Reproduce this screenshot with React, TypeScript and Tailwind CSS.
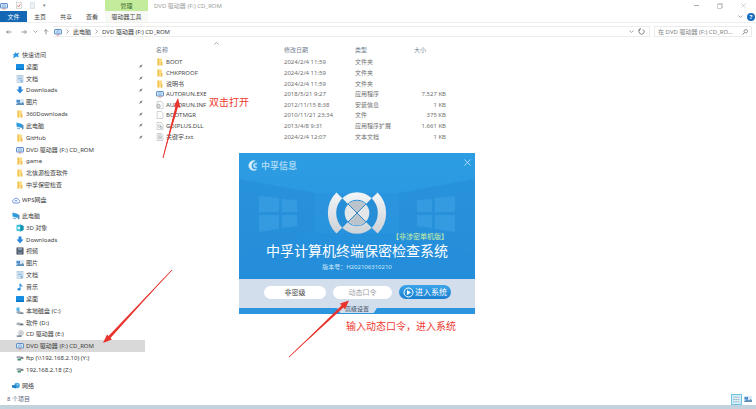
import React from 'react';

type IconName =
  | 'disc' | 'star' | 'desktop' | 'doc' | 'down' | 'picture' | 'folder' | 'pc' | 'cloud'
  | 'cube' | 'video' | 'music' | 'osdrive' | 'drive' | 'cd' | 'netdrive' | 'network'
  | 'inf' | 'file' | 'dll' | 'txt';

function Icon({ name }: { name: IconName }) {
  return (
    <svg viewBox="0 0 16 16" className="h-2 w-2 shrink-0" aria-hidden="true">
      {name === 'disc' && (
        <>
          <rect x="0" y="2" width="16" height="11" rx="3" fill="#5f8fc9" />
          <rect x="2" y="4" width="12" height="7" rx="1" fill="#dceaf8" />
          <circle cx="8" cy="8" r="3.6" fill="#7fb2e6" />
          <circle cx="8" cy="8" r="1.3" fill="#fff" />
          <path d="M5 13h6v2H5z" fill="#d58f86" />
        </>
      )}
      {name === 'star' && <path d="M6 2l3 3 6-2-3 5 2 5-5-2-7 4 2-6-3-2 4-1z" fill="#2c97de" />}
      {name === 'desktop' && (
        <>
          <rect x="0" y="2" width="16" height="12" rx="1" fill="#168de2" />
          <path d="M0 11h16v2a1 1 0 0 1-1 1H1a1 1 0 0 1-1-1z" fill="#0b74c4" />
        </>
      )}
      {name === 'doc' && (
        <>
          <rect x="2" y="1" width="12" height="14" fill="#e9f2fa" stroke="#8ca9c2" />
          <path d="M4 4h8M4 7h8M4 10h5" stroke="#4f8fc4" />
          <path d="M9 9h4v5H9z" fill="#7fb4df" />
        </>
      )}
      {name === 'down' && <path d="M5 1h6v6h4l-7 8-7-8h4z" fill="#2b88dd" />}
      {name === 'picture' && (
        <>
          <rect x="0" y="2" width="16" height="12" fill="#d8eaf8" />
          <path d="M1 4h7v5H1z" fill="#4a8ccb" />
          <path d="M0 13l6-5 4 3 3-3 3 3v3H0z" fill="#5d90b9" />
        </>
      )}
      {name === 'folder' && (
        <>
          <path d="M3 1h9v14H3z" fill="#fbdc84" />
          <path d="M3 1h3v14H3z" fill="#f2c453" />
          <path d="M10 8h3v7h-3z" fill="#efc25c" />
        </>
      )}
      {name === 'pc' && (
        <>
          <path d="M1 1l11 3v8L1 9z" fill="#2e9be0" />
          <path d="M12 5l3 1v8l-3 1z" fill="#5c8fb5" />
          <path d="M3 11l6 2-2 2-6-2z" fill="#8ab4d3" />
        </>
      )}
      {name === 'cloud' && (
        <path
          d="M4 14a3.2 3.2 0 0 1-.5-6.300A5 5 0 0 1 13 8a3 3 0 0 1-.5 6zM6 11l2-3 2 3"
          fill="none" stroke="#5b86dd" strokeWidth="1.700"
        />
      )}
      {name === 'cube' && (
        <>
          <path d="M1 2l8-1 6 3v8l-6 3-8-2z" fill="#35c0d6" />
          <path d="M9 1l6 3v8l-6 3z" fill="#1690ad" />
          <path d="M3 5l5 1v5l-5-1z" fill="#d9f6fa" />
        </>
      )}
      {name === 'video' && (
        <>
          <rect x="1" y="1" width="14" height="14" fill="#3f4650" />
          <rect x="4" y="2" width="8" height="5" fill="#8397b4" />
          <rect x="4" y="9" width="8" height="5" fill="#6f7f95" />
          <path d="M2.500 2v12M13.500 2v12" stroke="#c9ced6" strokeDasharray="1.500 1.500" />
        </>
      )}
      {name === 'music' && (
        <>
          <path d="M7 1h2c0 3 5 3 4 8-1-2-2-3-4-3v6H7z" fill="#1f8fe0" />
          <ellipse cx="6" cy="12.500" rx="3.200" ry="2.500" fill="#1f8fe0" />
        </>
      )}
      {name === 'osdrive' && (
        <>
          <path d="M1 1h6v7H1z" fill="#56b4ea" />
          <path d="M1 9l4-1 10 3v3H6l-5-2z" fill="#98a5ae" />
          <path d="M10 12h4v1h-4z" fill="#3d5363" />
        </>
      )}
      {name === 'drive' && (
        <>
          <path d="M1 8l4-1 10 2v4H6l-5-2z" fill="#a5adb3" />
          <path d="M9 10h5v2H9z" fill="#59646c" />
        </>
      )}
      {name === 'cd' && (
        <>
          <circle cx="10" cy="6" r="5" fill="#dfe3e8" stroke="#a2a8af" />
          <circle cx="10" cy="6" r="1.300" fill="#8e959c" />
          <path d="M1 11l10-1v4H4l-3-1z" fill="#858d94" />
        </>
      )}
      {name === 'netdrive' && (
        <>
          <path d="M1 5l5-1 9 2v4H6L1 8z" fill="#a2aab1" />
          <path d="M3 10h7v3H3z" fill="#39966b" />
          <path d="M10 7h4v2h-4z" fill="#4c5962" />
        </>
      )}
      {name === 'network' && (
        <>
          <circle cx="10" cy="7" r="5.500" fill="#3f9fdc" />
          <path d="M0 6l8 1v6l-8-2z" fill="#1d7fc6" />
          <path d="M8 3l5 1-1 4z" fill="#9cd4f3" />
        </>
      )}
      {(name === 'inf' || name === 'file' || name === 'dll' || name === 'txt') && (
        <path d="M2 1h9l3 3v11H2z" fill="#fbfbfb" stroke="#a9adb1" />
      )}
      {name === 'inf' && <circle cx="5" cy="10" r="3.500" fill="#e2e4e6" stroke="#74797d" />}
      {name === 'dll' && (
        <>
          <circle cx="7" cy="8" r="2.500" fill="none" stroke="#8b9196" />
          <circle cx="10" cy="11" r="2" fill="none" stroke="#8b9196" />
        </>
      )}
      {name === 'txt' && <path d="M4 4h7M4 6.500h8M4 9h8M4 11.500h8" stroke="#8d9297" />}
    </svg>
  );
}

function Pin() {
  return (
    <svg viewBox="0 0 10 10" className="h-[5px] w-[5px]" aria-hidden="true">
      <path d="M9 1L6 2 3 4l1 1-3 4 4-3 1 1 2-3z" fill="#7b828a" />
    </svg>
  );
}

function Chevron({ dir }: { dir: 'right' | 'down' | 'up' }) {
  const paths = { right: 'M3 1l4 4-4 4', down: 'M1 3l4 4 4-4', up: 'M1 7l4-4 4 4' };
  return (
    <svg viewBox="0 0 10 10" className="h-[5px] w-[5px] shrink-0" aria-hidden="true">
      <path d={paths[dir]} fill="none" stroke="#888" strokeWidth="1.500" />
    </svg>
  );
}

function Arrow({ dir }: { dir: 'left' | 'right' | 'up' }) {
  const paths = {
    left: 'M9 5H1M4 2L1 5l3 3',
    right: 'M1 5h8M6 2l3 3-3 3',
    up: 'M5 9V1M2 4l3-3 3 3',
  };
  return (
    <svg viewBox="0 0 10 10" className="h-[6px] w-[6px]" aria-hidden="true">
      <path d={paths[dir]} fill="none" stroke="#777" strokeWidth="1.300" />
    </svg>
  );
}

interface Place {
  icon: IconName;
  label: string;
  pinned?: boolean;
  root?: boolean;
  active?: boolean;
}

const quick: Place[] = [
  { icon: 'star', label: '快速访问', root: true },
  { icon: 'desktop', label: '桌面', pinned: true },
  { icon: 'doc', label: '文档', pinned: true },
  { icon: 'down', label: 'Downloads', pinned: true },
  { icon: 'picture', label: '图片', pinned: true },
  { icon: 'folder', label: '360Downloads', pinned: true },
  { icon: 'pc', label: '此电脑', pinned: true },
  { icon: 'folder', label: 'GitHub', pinned: true },
  { icon: 'disc', label: 'DVD 驱动器 (F:) CD_ROM' },
  { icon: 'folder', label: 'game' },
  { icon: 'folder', label: '北信源检查软件' },
  { icon: 'folder', label: '中孚保密检查' },
];

const computer: Place[] = [
  { icon: 'pc', label: '此电脑', root: true },
  { icon: 'cube', label: '3D 对象' },
  { icon: 'down', label: 'Downloads' },
  { icon: 'video', label: '视频' },
  { icon: 'picture', label: '图片' },
  { icon: 'doc', label: '文档' },
  { icon: 'music', label: '音乐' },
  { icon: 'desktop', label: '桌面' },
  { icon: 'osdrive', label: '本地磁盘 (C:)' },
  { icon: 'drive', label: '软件 (D:)' },
  { icon: 'cd', label: 'CD 驱动器 (E:)' },
  { icon: 'disc', label: 'DVD 驱动器 (F:) CD_ROM', active: true },
  { icon: 'netdrive', label: 'ftp (\\\\192.168.2.10) (Y:)' },
  { icon: 'netdrive', label: '192.168.2.18 (Z:)' },
];

function PlaceRow({ place }: { place: Place }) {
  return (
    <a
      href="#"
      className={`flex min-h-0 items-center gap-[2px] pr-[2px] ${place.root ? 'pl-3' : 'pl-4'} ${place.active ? 'bg-[#d9d9d9]' : ''}`}
    >
      <Icon name={place.icon} />
      <span className="flex-1 whitespace-nowrap">{place.label}</span>
      {place.pinned && <Pin />}
    </a>
  );
}

const files: { icon: IconName; name: string; date: string; type: string; size: string }[] = [
  { icon: 'folder', name: 'BOOT', date: '2024/2/4 11:59', type: '文件夹', size: '' },
  { icon: 'folder', name: 'CHKPROOF', date: '2024/2/4 11:59', type: '文件夹', size: '' },
  { icon: 'folder', name: '说明书', date: '2024/2/4 11:59', type: '文件夹', size: '' },
  { icon: 'disc', name: 'AUTORUN.EXE', date: '2018/5/21 9:27', type: '应用程序', size: '7,527 KB' },
  { icon: 'inf', name: 'AUTORUN.INF', date: '2012/11/15 8:38', type: '安装信息', size: '1 KB' },
  { icon: 'file', name: 'BOOTMGR', date: '2010/11/21 23:34', type: '文件', size: '375 KB' },
  { icon: 'dll', name: 'GDIPLUS.DLL', date: '2013/4/8 9:31', type: '应用程序扩展', size: '1,661 KB' },
  { icon: 'txt', name: '关键字.txt', date: '2024/2/4 12:07', type: '文本文档', size: '1 KB' },
];

function TitleBar() {
  return (
    <header className="text-[#444]">
      <div className="flex h-[11px] items-center">
        <div className="flex w-[105px] items-center gap-2">
          <Icon name="disc" />
          <svg viewBox="0 0 12 14" className="h-[7px] w-[6px]" aria-hidden="true">
            <rect x="1" y="1" width="10" height="12" fill="#fff" stroke="#b5b5b5" />
            <path d="M3 7l2 3 4-6" fill="none" stroke="#dc5b48" strokeWidth="1.500" />
          </svg>
          <svg viewBox="0 0 10 14" className="h-[7px] w-[5px]" aria-hidden="true">
            <path d="M1 1h8v12H1z" fill="#edf2f6" stroke="#c2ccd5" />
          </svg>
          <span className="text-[5px] leading-none text-[#777]">▾</span>
        </div>
        <div className="flex h-full w-[43px] items-center justify-center bg-[#c3eb9c] text-[#3f6a2b]">管理</div>
        <div className="flex-1 pl-[6px] text-[#a0a0a0]">DVD 驱动器 (F:) CD_ROM</div>
        <div className="flex items-center gap-[18px] pr-[10px]">
          <button aria-label="最小化" className="h-px w-[5px] bg-[#aaa]" />
          <button aria-label="还原">
            <svg viewBox="0 0 12 12" className="h-[6px] w-[6px]" aria-hidden="true">
              <path d="M1 3h8v8H1zM3 3V1h8v8H9" fill="none" stroke="#999" />
            </svg>
          </button>
          <button aria-label="关闭">
            <svg viewBox="0 0 12 12" className="h-[5px] w-[5px]" aria-hidden="true">
              <path d="M1 1l10 10M11 1L1 11" stroke="#999" />
            </svg>
          </button>
        </div>
      </div>
      <nav className="flex h-3 items-stretch border-b border-[#f0f0f0]">
        <button className="w-[27px] bg-[#1467b5] text-white">文件</button>
        <button className="w-[26px]">主页</button>
        <button className="w-[26px]">共享</button>
        <button className="w-[26px]">查看</button>
        <button className="w-[43px] bg-[#f7faf4]">驱动器工具</button>
        <div className="ml-auto flex items-center gap-1 pr-px">
          <Chevron dir="down" />
          <button aria-label="帮助" className="h-2 w-2 rounded-full bg-[#1a6dbd] text-[6px] leading-[8px] font-bold text-white">?</button>
        </div>
      </nav>
    </header>
  );
}

function AddressBar() {
  return (
    <div className="mt-[3px] flex h-[11px] items-stretch gap-1 pr-1">
      <div className="flex w-[49px] shrink-0 items-center justify-between pl-[6px]">
        <button aria-label="后退"><Arrow dir="left" /></button>
        <button aria-label="前进" className="pl-1"><Arrow dir="right" /></button>
        <button aria-label="最近"><Chevron dir="down" /></button>
        <button aria-label="上移"><Arrow dir="up" /></button>
      </div>
      <div className="flex flex-1 items-center gap-[3px] border border-l-0 border-[#ececec] pl-px pr-1">
        <Icon name="disc" />
        <Chevron dir="right" />
        <span>此电脑</span>
        <Chevron dir="right" />
        <span className="flex-1">DVD 驱动器 (F:) CD_ROM</span>
        <Chevron dir="down" />
        <button aria-label="刷新" className="pl-px">
          <svg viewBox="0 0 12 12" className="h-[7px] w-[7px]" aria-hidden="true">
            <path d="M8 2a4.500 4.500 0 1 1-5 1M3 0v4H0" transform="rotate(8 6 6)" fill="none" stroke="#666" strokeWidth="1.300" />
          </svg>
        </button>
      </div>
      <label className="flex w-[98px] items-center border border-[#ececec] px-[3px]">
        <input aria-label="搜索" placeholder="在 DVD 驱动器 (F:) CD_RO..." className="min-w-0 flex-1 outline-none placeholder:text-[#858585]" />
        <svg viewBox="0 0 12 12" className="h-[6px] w-[6px]" aria-hidden="true">
          <circle cx="7.500" cy="4.500" r="3.500" fill="none" stroke="#666" strokeWidth="1.300" />
          <path d="M5 7l-4 4" stroke="#666" strokeWidth="1.500" />
        </svg>
      </label>
    </div>
  );
}

function FileTable() {
  return (
    <table className="h-[100px] w-[306px] table-fixed border-collapse text-left text-[#6f6f6f]">
      <thead className="text-[#71808f]">
        <tr className="h-[15px]">
          <th className="w-[128px] p-0 font-normal">
            <span className="flex items-center justify-between pr-[65px]">
              名称
              <span className="-mt-1 mb-2 h-[5px]"><Chevron dir="up" /></span>
            </span>
          </th>
          <th className="w-[71px] p-0 font-normal">修改日期</th>
          <th className="w-[59px] p-0 font-normal">类型</th>
          <th className="p-0 font-normal">大小</th>
        </tr>
      </thead>
      <tbody>
        {files.map((f) => (
          <tr key={f.name}>
            <td className="p-0 text-[#4a4a4a]">
              <span className="flex items-center gap-[2px]">
                <Icon name={f.icon} />
                {f.name}
              </span>
            </td>
            <td className="p-0">{f.date}</td>
            <td className="p-0">{f.type}</td>
            <td className="p-0 pr-4 text-right">{f.size}</td>
          </tr>
        ))}
      </tbody>
    </table>
  );
}

function Emblem() {
  return (
    <svg viewBox="-90 -66 180 132" className="h-[44px] w-[60px]" aria-hidden="true">
      <defs>
        <linearGradient id="silver" gradientUnits="userSpaceOnUse" x1="0" y1="-64" x2="0" y2="64">
          <stop offset="0" stopColor="#f4f6f8" />
          <stop offset="1" stopColor="#cdd2d7" />
        </linearGradient>
      </defs>
      <circle r="62" fill="#1c7cc4" opacity="0.250" />
      <g fill="none" stroke="url(#silver)">
        <path d="M-53-53A75 75 0 0 0-53 53M53-53A75 75 0 0 1 53 53" strokeWidth="25" />
        <path d="M-36-36A51 51 0 0 1 36-36M-36 36A51 51 0 0 0 36 36" strokeWidth="23" />
      </g>
      <circle r="37" fill="#e3e7ea" />
      <path d="M0 0L-26-26A37 37 0 0 1 26-26zM0 0L-26 26A37 37 0 0 0 26 26z" fill="#bcc4cb" />
      <path d="M-27-27L27 27M27-27L-27 27" stroke="#2f86c6" strokeWidth="3" />
    </svg>
  );
}

function WindowScene() {
  return (
    <svg viewBox="0 0 236 126" preserveAspectRatio="none" className="absolute inset-0 h-full w-full" aria-hidden="true">
      <path d="M0 26L76 40V80L0 102z" fill="#2389d6" opacity="0.500" />
      <path d="M236 26L160 40V80L236 102z" fill="#2389d6" opacity="0.500" />
      <path d="M76 40h84v40H76z" fill="#2a92dc" opacity="0.500" />
      <path d="M0 102L76 80h84l76 22v24H0z" fill="#1f86d5" opacity="0.350" />
      <g fill="#4fb0ec" opacity="0.350">
        <path d="M20 43l20 2v14H20zM43 46l15 1v12H43zM20 62h20v14l-20 3zM43 62h15v11l-15 2z" />
        <path d="M216 43l-20 2v14h20zM193 46l-15 1v12h15zM216 62h-20v14l20 3zM193 62h-15v11l15 2z" />
      </g>
    </svg>
  );
}

function LoginDialog() {
  return (
    <section
      aria-label="中孚计算机终端保密检查系统"
      className="absolute top-[153px] left-[239px] flex w-[236px] flex-col bg-[#2b95df] text-white"
    >
      <div className="relative h-[126px] bg-linear-to-b from-[#2d9de3] to-[#2791de]">
        <WindowScene />
        <div className="relative flex h-full flex-col">
          <div className="flex items-start justify-between pt-[6px] pr-1 pl-[9px]">
            <div className="flex items-center gap-[2px] text-[9px] leading-[13px] font-bold text-[#a5d8f6]">
              <svg viewBox="0 0 24 24" className="h-[11px] w-[11px]" aria-hidden="true">
                <path d="M17 2A11 11 0 1 0 20 20Q8 22 8 13T17 2z" fill="#d4edfb" />
                <path d="M20 6q-9-1-9 6t9 6l-1-4h-3v-4h4z" fill="#a5d8f6" />
              </svg>
              中孚信息
            </div>
            <button aria-label="关闭">
              <svg viewBox="0 0 14 14" className="h-[7px] w-[7px]" aria-hidden="true">
                <path d="M1 1l12 12M13 1L1 13" stroke="#d6eefc" strokeWidth="1.500" />
              </svg>
            </button>
          </div>
          <div className="mt-[19px] flex justify-center">
            <Emblem />
          </div>
          <div className="-mt-[2px] pr-[27px] text-right text-[7px] leading-[8px] text-[#c9f0a5]">【非涉密单机版】</div>
          <h1 className="text-center text-[14px] leading-[20px] whitespace-nowrap">中孚计算机终端保密检查系统</h1>
          <p className="pt-[2px] text-center text-[6px] leading-[8px] text-[#cde9fa]">版本号：H202106310210</p>
        </div>
      </div>
      <form className="flex h-[29px] items-center gap-[7px] bg-[#d3deec] pr-6 pb-[3px] pl-[25px]" onSubmit={(e) => e.preventDefault()}>
        <select aria-label="密级" className="h-[13px] w-[62px] appearance-none rounded-full bg-white text-center text-[7px] leading-[13px] text-[#444] [text-align-last:center]">
          <option>非密级</option>
        </select>
        <input
          aria-label="动态口令"
          placeholder="动态口令"
          className="h-[13px] w-[59px] rounded-full bg-white text-center text-[7px] outline-none placeholder:text-[#9aa0a6]"
        />
        <button className="flex h-[14px] flex-1 items-center justify-center gap-px rounded-full bg-linear-to-b from-[#3aa5ea] to-[#1b7fd0] text-[8px] leading-[14px] whitespace-nowrap text-white">
          <svg viewBox="0 0 22 22" className="h-[11px] w-[11px]" aria-hidden="true">
            <circle cx="11" cy="11" r="9" fill="none" stroke="#fff" strokeWidth="2" />
            <path d="M8 6l8 5-8 5z" fill="#fff" />
          </svg>
          进入系统
        </button>
      </form>
      <div className="flex h-[6px] justify-center">
        <button className="-mt-[2px] flex h-[7px] w-[42px] items-center justify-center bg-[#d3deec] leading-[7px] text-[#3c4f66] [clip-path:polygon(0_0,100%_0,90%_100%,10%_100%)]">高级设置</button>
      </div>
    </section>
  );
}

function Annotations() {
  return (
    <div className="pointer-events-none absolute inset-0 text-[10px] leading-[14px] text-[#ee3a30]">
      <svg className="absolute inset-0 h-full w-full" aria-hidden="true">
        <g fill="#e8342c">
          <path d="M178 98L173.500 107 175.500 106.500 162.500 159 178 107 180.500 108z" />
          <path d="M103 343L107 334.500 108.500 336 172.500 269 110.500 338 112 339.500z" />
          <path d="M349 300.500L340 303.500 341.500 305.500 288 358 343.500 307.500 345 309.500z" />
        </g>
        <g fill="none" stroke="#e8342c">
          <path d="M176.500 107L163 158M109 337L172 270M342 307L289 357" />
        </g>
      </svg>
      <span className="absolute top-[95px] left-[209px]">双击打开</span>
      <span className="absolute top-[319px] left-[346px] whitespace-nowrap">输入动态口令，进入系统</span>
    </div>
  );
}

export default function App() {
  return (
    <div className="relative flex min-h-screen flex-col overflow-hidden bg-white font-['Noto_Sans','Noto_Sans_CJK_SC',sans-serif] text-[6px] leading-[8px] text-[#404040]">
      <TitleBar />
      <AddressBar />
      <main className="flex flex-1">
        <aside className="w-[145px] shrink-0 pt-3">
          <div className="grid h-[142px] auto-rows-fr">
            {quick.map((p) => <PlaceRow key={p.label} place={p} />)}
          </div>
          <div className="grid h-[19px] pb-px">
            <PlaceRow place={{ icon: 'cloud', label: 'WPS网盘', root: true }} />
          </div>
          <div className="grid h-[166px] auto-rows-fr">
            {computer.map((p) => <PlaceRow key={p.label} place={p} />)}
          </div>
          <div className="grid h-[15px] pt-1">
            <PlaceRow place={{ icon: 'network', label: '网络', root: true }} />
          </div>
        </aside>
        <div className="pt-[5px] pl-[11px]">
          <FileTable />
        </div>
      </main>
      <footer>
        <div className="flex h-3 items-center justify-between pr-1 pl-[7px] text-[#5a6680]">
          <span>8 个项目</span>
          <span className="flex items-center gap-[2px]">
            <button aria-label="详细信息" className="flex h-[11px] w-[11px] items-center justify-center border border-[#6fc3e6] bg-[#d5effa]">
              <svg viewBox="0 0 12 12" className="h-[7px] w-[7px]" aria-hidden="true">
                <path d="M0 2h12M0 6h12M0 10h12" stroke="#7e8d98" strokeDasharray="3 1" />
              </svg>
            </button>
            <button aria-label="大图标"><Icon name="picture" /></button>
          </span>
        </div>
        <div className="h-1 bg-[#c3d3dd]" />
      </footer>
      <LoginDialog />
      <Annotations />
    </div>
  );
}
